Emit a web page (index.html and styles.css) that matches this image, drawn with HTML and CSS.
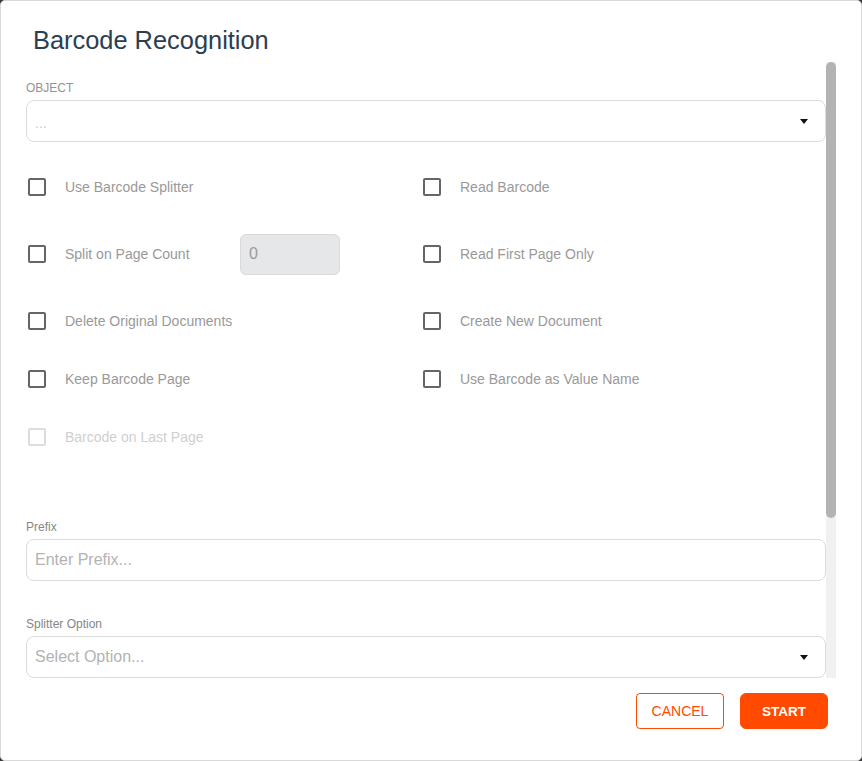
FILE: index.html
```html
<!DOCTYPE html>
<html lang="en">
<head>
<meta charset="utf-8">
<title>Barcode Recognition</title>
<link rel="stylesheet" href="styles.css">
</head>
<body>
<div class="dialog">
  <header class="dialog-header">
    <h1 class="dialog-title">Barcode Recognition</h1>
  </header>
  <div class="dialog-body">
    <div class="body-scroll">
      <div class="body-inner">
        <label class="field-label upper">Object</label>
        <div class="select">
          <span class="placeholder small">...</span>
          <span class="caret"></span>
        </div>

        <div class="checks">
          <div class="check-row">
            <span class="box"></span><span class="check-label">Use Barcode Splitter</span>
          </div>
          <div class="check-row">
            <span class="box"></span><span class="check-label">Read Barcode</span>
          </div>

          <div class="check-row">
            <span class="box"></span><span class="check-label fixed">Split on Page Count</span>
            <div class="count-input">0</div>
          </div>
          <div class="check-row">
            <span class="box"></span><span class="check-label">Read First Page Only</span>
          </div>

          <div class="check-row">
            <span class="box"></span><span class="check-label">Delete Original Documents</span>
          </div>
          <div class="check-row">
            <span class="box"></span><span class="check-label">Create New Document</span>
          </div>

          <div class="check-row">
            <span class="box"></span><span class="check-label">Keep Barcode Page</span>
          </div>
          <div class="check-row">
            <span class="box"></span><span class="check-label">Use Barcode as Value Name</span>
          </div>

          <div class="check-row disabled">
            <span class="box"></span><span class="check-label">Barcode on Last Page</span>
          </div>
          <div class="check-row"></div>
        </div>

        <label class="field-label prefix-label">Prefix</label>
        <div class="input">
          <span class="placeholder">Enter Prefix...</span>
        </div>

        <label class="field-label splitter-label">Splitter Option</label>
        <div class="select">
          <span class="placeholder">Select Option...</span>
          <span class="caret"></span>
        </div>
      </div>
    </div>
    <div class="scrollbar"><div class="scroll-thumb"></div></div>
  </div>
  <footer class="dialog-footer">
    <button class="btn btn-outline">CANCEL</button>
    <button class="btn btn-primary">START</button>
  </footer>
</div>
</body>
</html>
```

FILE: styles.css
```css
html, body {
  margin: 0;
  padding: 0;
  background: #3a3a3a;
}

body {
  font-family: "Liberation Sans", Arial, sans-serif;
}

.dialog {
  width: 862px;
  height: 761px;
  box-sizing: border-box;
  border: 1px solid #d9d9d9;
  border-radius: 5px;
  background: #ffffff;
  display: flex;
  flex-direction: column;
  overflow: hidden;
}

.dialog-header {
  height: 61px;
  box-sizing: border-box;
  padding: 25px 0 0 32px;
  flex: none;
}

.dialog-title {
  margin: 0;
  font-size: 25.4px;
  line-height: 28px;
  font-weight: normal;
  color: #2c3e50;
}

.dialog-body {
  flex: none;
  height: 616px;
  margin: 0 25px;
  display: flex;
}

.body-scroll {
  flex: 1;
  overflow: hidden;
}

.scrollbar {
  width: 10px;
  flex: none;
  background: #f1f1f1;
  display: flex;
  flex-direction: column;
}

.scroll-thumb {
  height: 456px;
  background: #b3b3b3;
  border-radius: 5px;
}

.body-inner {
  padding: 18px 0 0 0;
  display: flex;
  flex-direction: column;
}

.field-label {
  display: block;
  font-size: 12px;
  line-height: 16px;
  color: #868686;
  margin-bottom: 4px;
}

.field-label.upper {
  text-transform: uppercase;
  color: #939393;
}

.prefix-label {
  margin-top: 53px;
}

.splitter-label {
  margin-top: 35px;
}

.select,
.input {
  height: 42px;
  box-sizing: border-box;
  border: 1px solid #dcdcdc;
  border-radius: 8px;
  display: flex;
  align-items: center;
  padding: 0 17px 0 8px;
}

.placeholder {
  flex: 1;
  font-size: 16px;
  color: #b3b3b3;
}

.placeholder.small {
  font-size: 14px;
  color: #cccccc;
  padding-top: 3px;
}

.caret {
  width: 0;
  height: 0;
  border-left: 4px solid transparent;
  border-right: 4px solid transparent;
  border-top: 5px solid #111;
}

.checks {
  margin-top: 16px;
  display: grid;
  grid-template-columns: 395px 1fr;
  grid-template-rows: 58px 76px 58px 58px 58px;
}

.check-row {
  display: flex;
  align-items: center;
  padding-left: 2px;
}

.box {
  width: 18px;
  height: 18px;
  box-sizing: border-box;
  border: 2px solid #666666;
  border-radius: 2px;
  flex: none;
}

.check-label {
  margin-left: 19px;
  font-size: 14px;
  color: #999999;
}

.check-label.fixed {
  width: 175px;
}

.check-row.disabled .box {
  border-color: #dddddd;
}

.check-row.disabled .check-label {
  color: #cfcfcf;
}

.count-input {
  width: 100px;
  height: 41px;
  box-sizing: border-box;
  background: #e6e7e9;
  border: 1px solid #dadada;
  border-radius: 6px;
  display: flex;
  align-items: center;
  padding-left: 8px;
  font-size: 16px;
  color: #9a9a9a;
}

.dialog-footer {
  flex: none;
  display: flex;
  justify-content: flex-end;
  gap: 16px;
  padding: 15px 33px 0 0;
}

.btn {
  width: 88px;
  height: 36px;
  box-sizing: border-box;
  border-radius: 5px;
  font-family: "Liberation Sans", Arial, sans-serif;
  font-size: 14px;
  cursor: pointer;
}

.btn-outline {
  background: #ffffff;
  border: 1px solid #ff4a00;
  color: #ff4a00;
  border-radius: 4px;
}

.btn-primary {
  background: #ff4a00;
  border: 1px solid #ff4a00;
  color: #ffffff;
  font-weight: bold;
  font-size: 13.5px;
  border-radius: 6px;
}
```
